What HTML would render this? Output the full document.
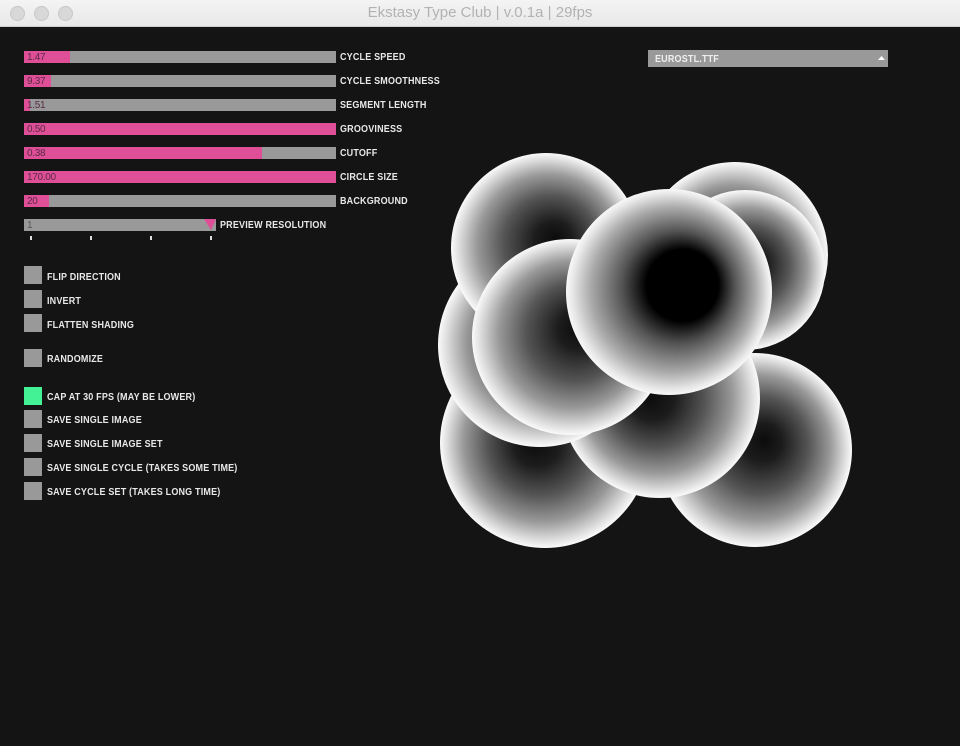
<!DOCTYPE html>
<html><head><meta charset="utf-8"><style>
html,body{margin:0;padding:0;}
body{width:960px;height:746px;background:#141414;position:relative;overflow:hidden;font-family:"Liberation Sans Narrow","Liberation Sans",sans-serif;}
.tb{position:absolute;left:0;top:0;width:960px;height:26px;background:linear-gradient(#f4f4f4,#e8e8e8);border-bottom:1px solid #cfcfcf;}
.tb .t{position:absolute;left:0;right:0;top:4px;text-align:center;font:15px "Liberation Sans",sans-serif;color:#b2b2b2;}
.dot{position:absolute;top:6px;width:13px;height:13px;border-radius:50%;background:#d8d8d8;border:0.5px solid #c8c8c8;}
.s{position:absolute;left:24px;width:312px;height:12px;background:#999;}
.s i{position:absolute;left:0;top:0;height:12px;background:#de4f98;}
.s b{position:absolute;left:3px;top:1px;font:10px/12px "Liberation Sans",sans-serif;color:#5a2a45;font-weight:normal;letter-spacing:-0.3px;}
.l{position:absolute;font:bold 10px/12px "Liberation Sans",sans-serif;color:#e8e8e8;letter-spacing:0.2px;transform:scaleX(0.9);transform-origin:left;margin-top:1px;}
.c{position:absolute;left:24px;width:18px;height:18px;background:#999;}
.tk{position:absolute;top:236px;width:2px;height:4px;background:#ddd;}
</style></head><body>
<div class="tb"><div class="dot" style="left:10px"></div><div class="dot" style="left:34px"></div><div class="dot" style="left:58px"></div><div class="t">Ekstasy Type Club | v.0.1a | 29fps</div></div>

<div class="s" style="top:51px"><i style="width:46px"></i><b>1.47</b></div><div class="l" style="left:340px;top:51px">CYCLE SPEED</div>
<div class="s" style="top:75px"><i style="width:27px"></i><b>9.37</b></div><div class="l" style="left:340px;top:75px">CYCLE SMOOTHNESS</div>
<div class="s" style="top:99px"><i style="width:6px"></i><b>1.51</b></div><div class="l" style="left:340px;top:99px">SEGMENT LENGTH</div>
<div class="s" style="top:123px"><i style="width:312px"></i><b>0.50</b></div><div class="l" style="left:340px;top:123px">GROOVINESS</div>
<div class="s" style="top:147px"><i style="width:238px"></i><b>0.38</b></div><div class="l" style="left:340px;top:147px">CUTOFF</div>
<div class="s" style="top:171px"><i style="width:312px"></i><b>170.00</b></div><div class="l" style="left:340px;top:171px">CIRCLE SIZE</div>
<div class="s" style="top:195px"><i style="width:25px"></i><b>20</b></div><div class="l" style="left:340px;top:195px">BACKGROUND</div>
<div class="s" style="top:219px;width:192px"><b style="color:#555">1</b></div>
<svg style="position:absolute;left:204px;top:219px" width="13" height="12"><polygon points="0,0 12,0 7,11" fill="#de4f98"/></svg>
<div class="l" style="left:220px;top:219px">PREVIEW RESOLUTION</div>
<div class="tk" style="left:30px"></div><div class="tk" style="left:90px"></div><div class="tk" style="left:150px"></div><div class="tk" style="left:210px"></div>

<div class="c" style="top:266px"></div><div class="l" style="left:47px;top:271px">FLIP DIRECTION</div>
<div class="c" style="top:290px"></div><div class="l" style="left:47px;top:295px">INVERT</div>
<div class="c" style="top:314px"></div><div class="l" style="left:47px;top:319px">FLATTEN SHADING</div>
<div class="c" style="top:349px"></div><div class="l" style="left:47px;top:353px">RANDOMIZE</div>
<div class="c" style="top:387px;background:#44f296"></div><div class="l" style="left:47px;top:391px">CAP AT 30 FPS (MAY BE LOWER)</div>
<div class="c" style="top:410px"></div><div class="l" style="left:47px;top:414px">SAVE SINGLE IMAGE</div>
<div class="c" style="top:434px"></div><div class="l" style="left:47px;top:438px">SAVE SINGLE IMAGE SET</div>
<div class="c" style="top:458px"></div><div class="l" style="left:47px;top:462px">SAVE SINGLE CYCLE (TAKES SOME TIME)</div>
<div class="c" style="top:482px"></div><div class="l" style="left:47px;top:486px">SAVE CYCLE SET (TAKES LONG TIME)</div>

<div style="position:absolute;left:648px;top:50px;width:240px;height:17px;background:#999"></div>
<div class="l" style="left:655px;top:53px;color:#f0f0f0">EUROSTL.TTF</div>
<svg style="position:absolute;left:878px;top:56px" width="8" height="5"><polygon points="0,4 7,4 3.5,0" fill="#fff"/></svg>

<svg style="position:absolute;left:0;top:0" width="960" height="746">
<defs>
<radialGradient id="g1" cx="0.5" cy="0.5" r="0.5" fx="0.45" fy="0.5"><stop offset="0" stop-color="#0c0c0c"/><stop offset="0.22" stop-color="#1c1c1c"/><stop offset="0.5" stop-color="#555"/><stop offset="0.75" stop-color="#999"/><stop offset="0.93" stop-color="#e0e0e0"/><stop offset="1" stop-color="#fafafa"/></radialGradient>
<radialGradient id="g2" cx="0.5" cy="0.5" r="0.5" fx="0.55" fy="0.45"><stop offset="0" stop-color="#0c0c0c"/><stop offset="0.2" stop-color="#1c1c1c"/><stop offset="0.5" stop-color="#555"/><stop offset="0.75" stop-color="#999"/><stop offset="0.93" stop-color="#e0e0e0"/><stop offset="1" stop-color="#fafafa"/></radialGradient>
<radialGradient id="g3" cx="0.5" cy="0.5" r="0.5" fx="0.6" fy="0.45"><stop offset="0" stop-color="#000"/><stop offset="0.35" stop-color="#000"/><stop offset="0.55" stop-color="#555"/><stop offset="0.8" stop-color="#aaa"/><stop offset="0.95" stop-color="#e8e8e8"/><stop offset="1" stop-color="#f8f8f8"/></radialGradient>
</defs>
<circle cx="545" cy="443" r="105" fill="url(#g1)"/>
<circle cx="755" cy="450" r="97" fill="url(#g2)"/>
<circle cx="660" cy="398" r="100" fill="url(#g1)"/>
<circle cx="540" cy="345" r="102" fill="url(#g2)"/>
<circle cx="546" cy="248" r="95" fill="url(#g2)"/>
<circle cx="735" cy="255" r="93" fill="url(#g1)"/>
<circle cx="745" cy="270" r="80" fill="url(#g2)"/>
<circle cx="570" cy="337" r="98" fill="url(#g2)"/>
<circle cx="669" cy="292" r="103" fill="url(#g3)"/>
</svg>
</body></html>
